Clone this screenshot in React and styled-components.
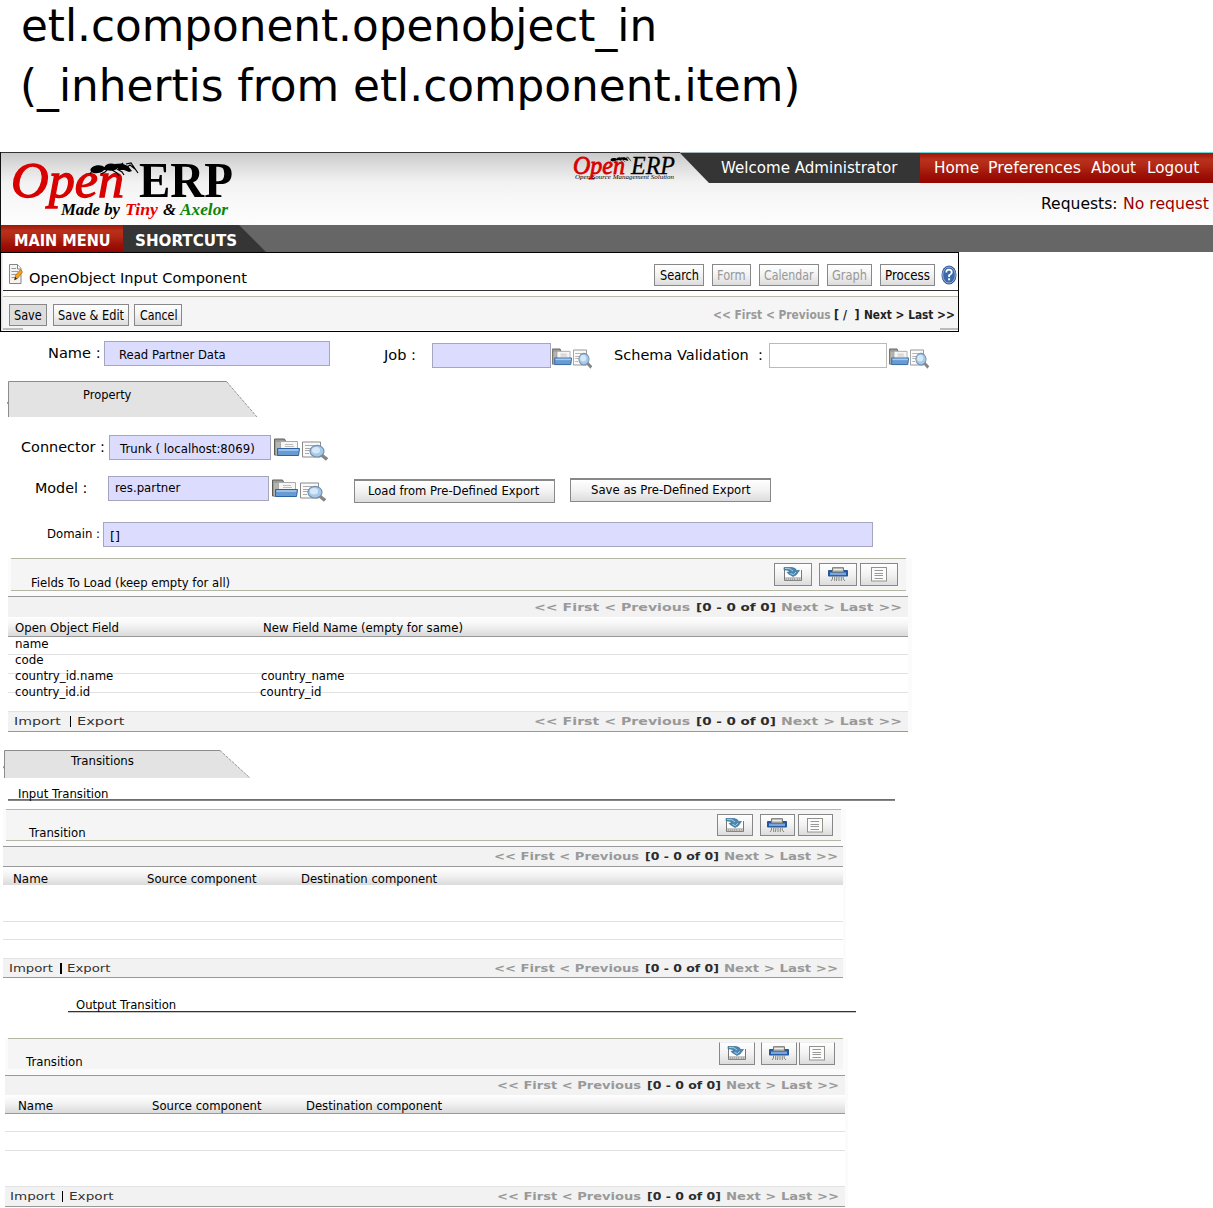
import React, { useLayoutEffect, useRef, useState } from "react";
import styled, { createGlobalStyle, css } from "styled-components";

const Global = createGlobalStyle`
  html, body { margin: 0; padding: 0; background: #fff; }
  body { font-family: "DejaVu Sans", sans-serif; color: #000; overflow: hidden; }
  svg { display: block; flex: none; }
`;

/* ---------- text ---------- */

const TextBox = styled.span`
  display: block;
  flex: none;
  overflow: visible;
  width: ${(p) => p.$w}px;
  height: ${(p) => p.$line}px;
  line-height: ${(p) => p.$line}px;
  margin-left: ${(p) => p.$gap}px;
  margin-top: ${(p) => p.$top}px;
  font-size: ${(p) => p.$size}px;
  font-weight: ${(p) => (p.$bold ? 700 : 400)};
  color: ${(p) => p.$color};
`;

const TextInk = styled.span`
  display: inline-block;
  vertical-align: top;
  margin-left: -0.015em;
  white-space: pre;
  transform-origin: 0 0;
`;

/* One line of text, stretched to a set width and standing on a baseline. */
function Line({ children, w, gap = 0, base = 0, size = 12, bold, color = "#000" }) {
  const ref = useRef(null);
  const [scale, setScale] = useState(1);
  useLayoutEffect(() => {
    const natural = ref.current.offsetWidth;
    if (natural) setScale((w + size * 0.05) / natural);
  }, [w, size, children]);
  const ascent = Math.round(size * 0.928);
  const descent = Math.round(size * 0.236);
  return (
    <TextBox $w={w} $gap={gap} $top={base - ascent} $line={ascent + descent} $size={size} $bold={bold} $color={color}>
      <TextInk ref={ref} style={{ transform: `scaleX(${scale})` }}>{children}</TextInk>
    </TextBox>
  );
}

/* ---------- layout ---------- */

const Page = styled.main`
  width: 1213px;
  height: 1208px;
  overflow: hidden;
  display: flex;
  flex-direction: column;
  align-items: flex-start;
`;

const Row = styled.div`
  display: flex;
  flex: none;
  align-items: flex-start;
  height: ${(p) => p.$h}px;
  width: ${(p) => (p.$w ? `${p.$w}px` : "100%")};
`;

const Push = styled.div`
  flex: none;
  margin-left: ${(p) => p.$gap || 0}px;
  margin-top: ${(p) => p.$top || 0}px;
`;

const Header = styled.header`
  display: flex;
  align-items: flex-start;
  box-sizing: border-box;
  flex: none;
  width: 1213px;
  height: 73px;
  border-left: 1px solid #111;
  padding-top: 1px;
  background:
    linear-gradient(90deg, #333 679px, #a5b5b5 679px 919px, #70d5d5 919px) 0 0 / 100% 1px no-repeat,
    linear-gradient(#c8c8c8, #dedede 20%, #f2f2f2 42%, #f8f8f8 65%, #fdfdfd);
`;

const Account = styled.div`
  width: 533px;
  flex: none;
`;

const Welcome = styled.div`
  display: flex;
  align-items: flex-start;
  width: 240px;
  height: 30px;
  background: #353535;
  clip-path: polygon(0 0, 100% 0, 100% 100%, 29px 100%);
`;

const red = css`
  background: linear-gradient(#a01608, #b9301c 22%, #b02714 45%, #9c1006 75%, #950500);
`;

const Links = styled.nav`
  display: flex;
  align-items: flex-start;
  width: 293px;
  height: 30px;
  ${red}
`;

const MenuBar = styled.nav`
  display: flex;
  flex: none;
  box-sizing: border-box;
  width: 1213px;
  height: 27px;
  border-left: 1px solid #111;
  background: #666;
`;

const MainMenu = styled.div`
  display: flex;
  align-items: flex-start;
  width: 122px;
  ${red}
`;

const Shortcuts = styled.div`
  display: flex;
  align-items: flex-start;
  width: 143px;
  background: #353535;
  clip-path: polygon(0 0, 116px 0, 100% 100%, 0 100%);
`;

const Toolbar = styled.section`
  box-sizing: border-box;
  flex: none;
  width: 959px;
  height: 80px;
  border: 1px solid #000;
  padding-left: 2px;
  background: linear-gradient(90deg, #ddd, #f3f3f3) 0 0 / 2px 100% no-repeat;
`;

const ToolbarTitle = styled.div`
  display: flex;
  align-items: flex-start;
  height: 37px;
  border-bottom: 1px solid #333;
  background: #fff;
`;

const ToolbarActions = styled.div`
  display: flex;
  align-items: flex-start;
  height: 33px;
  margin-top: 5px;
  border-top: 1px solid #b9bbab;
  background:
    linear-gradient(#bbb, #bbb) 0 100% / 20px 2px no-repeat,
    linear-gradient(#bbb, #bbb) 100% 100% / 18px 2px no-repeat,
    #f5f5f5;
`;

const Button = styled.button`
  display: flex;
  align-items: flex-start;
  flex: none;
  box-sizing: border-box;
  padding: 0;
  margin: ${(p) => p.$top}px 0 0 ${(p) => p.$gap}px;
  width: ${(p) => p.$w}px;
  height: ${(p) => p.$h || 22}px;
  border: 1px solid #888;
  border-top-width: ${(p) => (p.$thick ? 2 : 1)}px;
  font: inherit;
  background: ${(p) => (p.$pressed ? "#ddd" : "linear-gradient(#fff, #f2f2f2 50%, #dcdcdc)")};
`;

const IconButton = styled(Button)`
  height: ${(p) => p.$h}px;
  ${(p) => p.$open && css`border-top-color: #f0f0f0;`}
`;

const Field = styled.div`
  display: flex;
  align-items: flex-start;
  flex: none;
  box-sizing: border-box;
  width: ${(p) => p.$w}px;
  height: 25px;
  margin: ${(p) => p.$top}px 0 0 ${(p) => p.$gap}px;
  border: 1px solid ${(p) => (p.$plain ? "#bbb" : "#a5a5bd")};
  background: ${(p) => (p.$plain ? "#fff" : "#dcdcff")};
`;

const Tab = styled.div`
  display: grid;
  flex: none;
  width: 251px;
  height: ${(p) => p.$h}px;
  margin: ${(p) => p.$top}px 0 0 ${(p) => p.$left}px;
  > * { grid-area: 1 / 1; }
`;

const SectionRule = styled.div`
  display: flex;
  align-items: flex-start;
  flex: none;
  box-sizing: border-box;
  width: ${(p) => p.$w}px;
  height: ${(p) => p.$h}px;
  margin-left: ${(p) => p.$left}px;
  ${(p) =>
    p.$dark
      ? css`background: linear-gradient(#333 50%, #c5c5c5 50%) 0 100% / 100% 2px no-repeat;`
      : css`background: linear-gradient(#6e6e6e 50%, #858585 50%) 0 100% / 100% 2px no-repeat;`}
`;

const Panel = styled.section`
  flex: none;
  width: ${(p) => p.$w}px;
  margin: ${(p) => p.$top}px 0 0 ${(p) => p.$left}px;
  background: #fbfbfb;
`;

const PanelHead = styled.div`
  display: flex;
  align-items: flex-start;
  box-sizing: border-box;
  width: ${(p) => p.$w}px;
  height: ${(p) => p.$h}px;
  margin: 0 0 ${(p) => p.$after}px 3px;
  border-top: 1px solid #b5b6a5;
  border-bottom: ${(p) => (p.$noRule ? "none" : "1px solid #b5b6a5")};
  background: #f5f5f5;
`;

const Table = styled.div`
  width: ${(p) => p.$w}px;
  border-top: 1px solid #999;
  border-bottom: 1px solid #999;
  background: #fff;
`;

const PagerRow = styled.div`
  display: flex;
  align-items: flex-start;
  height: ${(p) => p.$h}px;
  background: #f2f2f2;
`;

const TableHead = styled.div`
  display: flex;
  align-items: flex-start;
  box-sizing: border-box;
  height: ${(p) => p.$h}px;
  border-top: ${(p) => (p.$rule === "top" ? "1px solid #999" : "none")};
  border-bottom: ${(p) => (p.$rule === "bottom" ? "1px solid #999" : "none")};
  background: linear-gradient(#fff, #f3f3f3 45%, #dadada);
`;

const Body = styled.div`
  display: grid;
  > * { grid-area: 1 / 1; }
`;

const Rule = styled.div`
  box-sizing: border-box;
  height: ${(p) => p.$h}px;
  border-bottom: 1px solid #e2e2e2;
`;

/* ---------- drawings ---------- */

const serif = '"Liberation Serif", serif';

function Ant({ transform }) {
  return (
    <g transform={transform}>
      <ellipse cx="8.5" cy="6.2" rx="7.2" ry="3.9" transform="rotate(-8 8.5 6.2)" />
      <ellipse cx="22" cy="4.2" rx="6.5" ry="3.6" />
      <path d="M14 4H18V7H14ZM25 1L33 .5L39 3L43 8L40 9L35 7L30 7Z" />
      <path d="M3 8L1 11M19 6L16 9L12 11M23 7L28 10L30 13M28 6L33 9L35 12M31 3L34 0M37 1L42 0L49 10M38 4L41 2L46 6" fill="none" stroke="#000" strokeWidth="1.2" />
    </g>
  );
}

function Logo() {
  return (
    <svg width="230" height="66" viewBox="0 0 230 66">
      <g fontFamily={serif}>
        <text x="3" y="44" fontSize="50" fontStyle="italic" fill="#d80000" stroke="#d80000" strokeWidth="1.3" textLength="113" lengthAdjust="spacingAndGlyphs">Open</text>
        <text x="131" y="44" fontSize="50" fontWeight="700" textLength="94" lengthAdjust="spacingAndGlyphs">ERP</text>
        <g fontSize="16.5" fontWeight="700" fontStyle="italic">
          <text x="53" y="62" textLength="59" lengthAdjust="spacingAndGlyphs">Made by</text>
          <text x="117" y="62" fill="#e80000" textLength="33" lengthAdjust="spacingAndGlyphs">Tiny</text>
          <text x="155" y="62" textLength="13" lengthAdjust="spacingAndGlyphs">&amp;</text>
          <text x="172" y="62" fill="#0a860a" textLength="48" lengthAdjust="spacingAndGlyphs">Axelor</text>
        </g>
      </g>
      <Ant transform="translate(81 10)" />
    </svg>
  );
}

function SmallLogo() {
  return (
    <svg width="107" height="30" viewBox="0 0 107 30">
      <g fontFamily={serif} fontStyle="italic">
        <text x="0" y="21" fontSize="25" fill="#d80000" stroke="#d80000" strokeWidth="0.8" textLength="52" lengthAdjust="spacingAndGlyphs">Open</text>
        <text x="58" y="21" fontSize="25" stroke="#000" strokeWidth="0.3" textLength="44" lengthAdjust="spacingAndGlyphs">ERP</text>
        <text x="2" y="26" fontSize="6.5" textLength="99" lengthAdjust="spacingAndGlyphs">Open Source Management Solution</text>
      </g>
      <Ant transform="translate(37 4) scale(.43)" />
    </svg>
  );
}

function EditPage() {
  return (
    <svg width="14" height="21" viewBox="0 0 14 21">
      <path d="M.5 .5H8.5L12 4.5V19.5H.5Z" fill="#f4f4f4" stroke="#858585" />
      <path d="M8.5 .5V5H12" fill="#fff" stroke="#858585" />
      <path d="M2.5 4.5H7M2.5 7.5H9M2.5 10.5H8M2.5 13.5H6" stroke="#999" />
      <path d="M5.5 16L6.5 11.5L11.5 5.5L13.5 8L8.5 14.5Z" fill="#f6a31c" stroke="#a85d08" strokeWidth=".7" />
      <path d="M5.5 16L6.2 13L8 14.6Z" fill="#222" />
    </svg>
  );
}

function Help() {
  return (
    <svg width="16" height="20" viewBox="0 0 16 20">
      <ellipse cx="8" cy="10" rx="7.5" ry="9.4" fill="#28518f" />
      <ellipse cx="8" cy="10" rx="6.3" ry="8.1" fill="#3b69aa" stroke="#b9cce6" strokeWidth=".8" />
      <path d="M5.3 7.5Q5.2 4.7 8 4.7Q10.8 4.7 10.8 7.3Q10.8 9 8.1 10.4V12" fill="none" stroke="#fff" strokeWidth="1.8" />
      <rect x="7.1" y="13.3" width="2" height="2" fill="#fff" />
    </svg>
  );
}

function Folder({ w = 26, h = 19 }) {
  return (
    <svg width={w} height={h} viewBox="0 0 26 19" preserveAspectRatio="none">
      <path d="M.5 17V1H10.5L12 4H22V17Z" fill="#9b9b97" stroke="#5d5d58" />
      <path d="M2 17V4H6V17Z" fill="#b5b5b0" />
      <path d="M6.5 3.5H23.5V14H6.5Z" fill="#f6f6f6" stroke="#aaa" />
      <path d="M11 6.5H19M11 8.5H20" stroke="#bdbdbd" />
      <path d="M3.5 10.5H25.5L24.5 17.5H3.5Z" fill="#689bd1" stroke="#2b61a5" />
      <path d="M4.5 12H24.5" stroke="#a9c8ea" strokeWidth="1.6" />
    </svg>
  );
}

function SearchPage({ w = 26, h = 20 }) {
  return (
    <svg width={w} height={h} viewBox="0 0 26 20" preserveAspectRatio="none">
      <path d="M.5 1H18.5V16H.5Z" fill="#fafafa" stroke="#8a8a8a" />
      <path d="M3 4.5H12M3 7.5H9M3 9.5H8M3 12.5H7" stroke="#aaa" />
      <path d="M19.5 14L25 18.5" stroke="#858585" strokeWidth="3.4" />
      <ellipse cx="15" cy="10.2" rx="7" ry="5.8" fill="#a6c9ea" stroke="#7590ad" strokeWidth="1.2" />
      <ellipse cx="14" cy="9.2" rx="4" ry="3.2" fill="#d5e8f8" />
    </svg>
  );
}

function DiskIcon() {
  return (
    <svg width="20" height="15" viewBox="0 0 20 15">
      <path d="M1.5 3V13.5H18.5V3" fill="#fff" stroke="#777" />
      <path d="M2 10H18V13.2H2Z" fill="#c9c9c5" />
      <path d="M3 12H12M14 12H17" stroke="#888" strokeDasharray="1 1" />
      <path d="M1 .5H9Q13 1 13.5 3.5H16.5L13 8L10 9.5L5 6.5L4 5.5L7 4.5Q5 2.8 1 2.8Z" fill="#4d87b0" stroke="#2a638c" strokeWidth=".6" />
      <path d="M2 1.5Q8 .8 10 4" fill="none" stroke="#a9cce2" />
      <path d="M7.5 6.4L10.4 7.6L13 5.2" fill="none" stroke="#9fd0ef" />
    </svg>
  );
}

function ShredIcon() {
  return (
    <svg width="20" height="15" viewBox="0 0 20 15">
      <rect x="0" y="3" width="20" height="6.5" rx=".8" fill="#2457a0" />
      <rect x="2" y="5.5" width="16" height="2.6" fill="#78a6df" />
      <path d="M4.5 5V.7H15.5V5Z" fill="#c6c6c0" stroke="#777770" />
      <path d="M5.5 2.5H14.5" stroke="#eee" />
      <path d="M4.5 9.5V12L3 14M6.7 9.5V14M9 9.5L8.5 14M11 9.5V14M13.3 9.5V14M15.2 9.5V12L17 14" fill="none" stroke="#85857e" />
    </svg>
  );
}

function ListIcon() {
  return (
    <svg width="16" height="15" viewBox="0 0 16 15">
      <rect x=".5" y=".5" width="15" height="13.5" fill="#fbfbfb" stroke="#92928b" />
      <path d="M3.5 3.5H12M3.5 6.5H12M3.5 8.5H12M3.5 11.5H12" stroke="#999" />
    </svg>
  );
}

function TabShape({ h, top = 219.5, end = 250 }) {
  return (
    <svg width="251" height={h} viewBox={`0 0 251 ${h}`}>
      <path d={`M1 ${h}V.5H${top}L${end} ${h}Z`} fill="#e3e3e3" />
      <path d={`M1.5 ${h}V.5H${top}`} fill="none" stroke="#8c8c8c" />
      <path d={`M${top} .5L${end} ${h}`} fill="none" stroke="#9a9a9a" strokeDasharray="3 1" />
      <rect x="0" y={h * 0.58} width="1" height="2" fill="#999" />
    </svg>
  );
}

/* ---------- parts ---------- */

function TextButton({ gap, top, w, tw, inset = 5, base, children, color, pressed }) {
  return (
    <Button $gap={gap} $top={top} $w={w} $pressed={pressed}>
      <Line gap={inset - 1} base={base} w={tw} size={13.5} color={color}>{children}</Line>
    </Button>
  );
}

function Pager({ gap, base, widths }) {
  return (
    <>
      <Line gap={gap - 1} base={base} w={widths[0]} size={11} bold color="#999">{"<< First < Previous"}</Line>
      <Line gap={7} base={base} w={widths[1]} size={11} bold color="#2b2b2b">[0 - 0 of 0]</Line>
      <Line gap={6} base={base} w={widths[2]} size={11} bold color="#999">{"Next > Last >>"}</Line>
    </>
  );
}

const Divider = styled.div`
  flex: none;
  width: ${(p) => p.$w}px;
  height: 11px;
  margin: ${(p) => p.$top}px 0 0 ${(p) => p.$gap}px;
  background: #000;
`;

function ImportExport({ left, base, imp, bar, barW = 1, exp, expW }) {
  return (
    <>
      <Line gap={left} base={base} w={imp} size={11} color="#333">Import</Line>
      <Divider $w={barW} $top={base - 9} $gap={bar} />
      <Line gap={exp - 1} base={base} w={expW + 1} size={11} color="#333">Export</Line>
    </>
  );
}

function Actions({ gap, top, widths, gaps, h, open }) {
  const icons = [<DiskIcon key="d" />, <ShredIcon key="s" />, <ListIcon key="l" />];
  return icons.map((icon, i) => (
    <IconButton key={i} $gap={i ? gaps[i - 1] : gap} $top={top} $w={widths[i]} $h={h} $open={open}>
      <Push $gap={Math.floor((widths[i] - (i === 2 ? 18 : 22)) / 2)} $top={3}>{icon}</Push>
    </IconButton>
  ));
}

export default function App() {
  return (
    <Page>
      <Global />
      <Row $h={60}><Line gap={22} base={41} w={634} size={44}>etl.component.openobject_in</Line></Row>
      <Row $h={92}><Line gap={21} base={41} w={778} size={44}>(_inhertis from etl.component.item)</Line></Row>

      <Header>
        <Push $gap={7}><Logo /></Push>
        <Push $gap={335}><SmallLogo /></Push>
        <Account>
          <Row $h={30}>
            <Welcome><Line gap={41} base={20} w={176} size={15} color="#fff">Welcome Administrator</Line></Welcome>
            <Links>
              <Line gap={14} base={20} w={44} size={15} color="#fff">Home</Line>
              <Line gap={10} base={20} w={92} size={15} color="#fff">Preferences</Line>
              <Line gap={11} base={20} w={44} size={15} color="#fff">About</Line>
              <Line gap={12} base={20} w={51} size={15} color="#fff">Logout</Line>
            </Links>
          </Row>
          <Row $h={42}>
            <Line gap={361} base={26} w={76} size={15}>Requests:</Line>
            <Line gap={6} base={26} w={85} size={15} color="#990000">No request</Line>
          </Row>
        </Account>
      </Header>

      <MenuBar>
        <MainMenu><Line gap={13} base={21} w={96} size={15} bold color="#fff">MAIN MENU</Line></MainMenu>
        <Shortcuts><Line gap={12} base={21} w={101} size={15} bold color="#fff">SHORTCUTS</Line></Shortcuts>
      </MenuBar>

      <Toolbar>
        <ToolbarTitle>
          <Push $gap={6} $top={11}><EditPage /></Push>
          <Line gap={6} base={30} w={217} size={14.67}>OpenObject Input Component</Line>
          <TextButton gap={408} top={11} w={50} inset={6} tw={38} base={15}>Search</TextButton>
          <TextButton gap={8} top={11} w={39} tw={28} base={15} color="#999">Form</TextButton>
          <TextButton gap={8} top={11} w={60} tw={49} base={15} color="#999">Calendar</TextButton>
          <TextButton gap={8} top={11} w={45} tw={34} base={15} color="#999">Graph</TextButton>
          <TextButton gap={8} top={11} w={55} tw={44} base={15}>Process</TextButton>
          <Push $gap={6} $top={12}><Help /></Push>
        </ToolbarTitle>
        <ToolbarActions>
          <TextButton gap={6} top={7} w={38} tw={27} base={15} pressed>Save</TextButton>
          <TextButton gap={6} top={7} w={76} tw={65} base={15}>{"Save & Edit"}</TextButton>
          <TextButton gap={5} top={7} w={48} inset={6} tw={37} base={15}>Cancel</TextButton>
          <Line gap={531} base={22} w={117} size={12.5} bold color="#999">{"<< First < Previous"}</Line>
          <Line gap={4} base={22} w={25} size={12.5} bold color="#222">{"[ /  ]"}</Line>
          <Line gap={5} base={22} w={90} size={12.5} bold color="#222">{"Next > Last >>"}</Line>
        </ToolbarActions>
      </Toolbar>

      <Row $h={49}>
        <Line gap={48} base={26} w={52} size={14.67}>Name :</Line>
        <Field $gap={4} $top={9} $w={226}><Line gap={14} base={17} w={106}>Read Partner Data</Line></Field>
        <Line gap={54} base={28} w={31} size={14.67}>Job :</Line>
        <Field $gap={17} $top={11} $w={119} />
        <Push $gap={1} $top={16}><Folder w={20} h={18} /></Push>
        <Push $gap={1} $top={17}><SearchPage w={19} h={20} /></Push>
        <Line gap={22} base={28} w={148} size={14.67}>Schema Validation  :</Line>
        <Field $gap={7} $top={11} $w={118} $plain />
        <Push $gap={2} $top={16}><Folder w={20} h={18} /></Push>
        <Push $gap={1} $top={17}><SearchPage w={19} h={20} /></Push>
      </Row>

      <Tab $left={7} $top={0} $h={36}>
        <TabShape h={36} />
        <Line gap={76} base={18} w={48}>Property</Line>
      </Tab>

      <Row $h={53}>
        <Line gap={21} base={35} w={83} size={14.67}>Connector :</Line>
        <Field $gap={5} $top={18} $w={162}><Line gap={10} base={17} w={134}>Trunk ( localhost:8069)</Line></Field>
        <Push $gap={3} $top={21}><Folder /></Push>
        <Push $gap={2} $top={24}><SearchPage /></Push>
      </Row>
      <Row $h={45}>
        <Line gap={35} base={23} w={52} size={14.67}>Model :</Line>
        <Field $gap={21} $top={6} $w={161}><Line gap={6} base={15} w={65}>res.partner</Line></Field>
        <Push $gap={3} $top={9}><Folder /></Push>
        <Push $gap={2} $top={12}><SearchPage /></Push>
        <Button $gap={28} $top={9} $w={201} $h={24} $thick><Line gap={13} base={14} w={171}>Load from Pre-Defined Export</Line></Button>
        <Button $gap={15} $top={8} $w={201} $h={24} $thick><Line gap={20} base={14} w={159}>Save as Pre-Defined Export</Line></Button>
      </Row>
      <Row $h={42}>
        <Line gap={47} base={23} w={52}>Domain :</Line>
        <Field $gap={4} $top={7} $w={770}><Line gap={6} base={18} w={9}>[]</Line></Field>
      </Row>

      <Panel $left={8} $top={1} $w={904}>
        <PanelHead $w={895} $h={33} $after={5}>
          <Line gap={20} base={28} w={199}>Fields To Load (keep empty for all)</Line>
          <Actions gap={544} gaps={[7, 3]} top={4} widths={[38, 38, 38]} h={23} />
        </PanelHead>
        <Table $w={900}>
          <PagerRow $h={20}><Pager gap={527} base={14} widths={[155, 79, 120]} /></PagerRow>
          <TableHead $h={20} $rule="bottom">
            <Line gap={7} base={15} w={103}>Open Object Field</Line>
            <Line gap={145} base={15} w={199}>New Field Name (empty for same)</Line>
          </TableHead>
          <Body>
            <div><Rule $h={18} /><Rule $h={19} /><Rule $h={19} /><Rule $h={19} /></div>
            <div>
              <Row $h={16}><Line gap={7} base={11} w={33}>name</Line></Row>
              <Row $h={16}><Line gap={7} base={11} w={28}>code</Line></Row>
              <Row $h={16}><Line gap={7} base={11} w={98}>country_id.name</Line><Line gap={148} base={11} w={83}>country_name</Line></Row>
              <Row $h={16}><Line gap={7} base={11} w={75}>country_id.id</Line><Line gap={170} base={11} w={61}>country_id</Line></Row>
            </div>
          </Body>
          <PagerRow $h={19}>
            <ImportExport left={6} base={13} imp={47} bar={9} exp={7} expW={46} />
            <Pager gap={411} base={13} widths={[155, 79, 120]} />
          </PagerRow>
        </Table>
      </Panel>

      <Tab $left={3} $top={18} $h={28}>
        <TabShape h={28} top={217} end={247} />
        <Line gap={68} base={15} w={62}>Transitions</Line>
      </Tab>
      <SectionRule $left={8} $w={887} $h={23}>
        <Line gap={10} base={20} w={90}>Input Transition</Line>
      </SectionRule>

      <Panel $left={3} $top={8} $w={843}>
        <PanelHead $w={835} $h={32} $after={5}>
          <Line gap={23} base={27} w={56}>Transition</Line>
          <Actions gap={632} gaps={[7, 3]} top={4} widths={[36, 35, 35]} h={22} />
        </PanelHead>
        <Table $w={840}>
          <PagerRow $h={19}><Pager gap={492} base={13} widths={[144, 73, 113]} /></PagerRow>
          <TableHead $h={19} $rule="top">
            <Line gap={10} base={16} w={34}>Name</Line>
            <Line gap={100} base={16} w={109}>Source component</Line>
            <Line gap={45} base={16} w={136}>Destination component</Line>
          </TableHead>
          <Rule $h={37} /><Rule $h={18} /><Rule $h={19} />
          <PagerRow $h={18}>
            <ImportExport left={6} base={13} imp={44} bar={7} barW={2} exp={6} expW={42} />
            <Pager gap={385} base={13} widths={[144, 73, 113]} />
          </PagerRow>
        </Table>
      </Panel>

      <SectionRule $left={68} $w={788} $h={35} $dark>
        <Line gap={8} base={31} w={100}>Output Transition</Line>
      </SectionRule>

      <Panel $left={5} $top={25} $w={843}>
        <PanelHead $w={835} $h={31} $after={6} $noRule>
          <Line gap={18} base={27} w={56}>Transition</Line>
          <Actions gap={637} gaps={[6, 2]} top={3} widths={[36, 36, 36]} h={23} open />
        </PanelHead>
        <Table $w={840}>
          <PagerRow $h={19}><Pager gap={493} base={13} widths={[143, 73, 112]} /></PagerRow>
          <TableHead $h={19} $rule="bottom">
            <Line gap={13} base={15} w={34}>Name</Line>
            <Line gap={100} base={15} w={109}>Source component</Line>
            <Line gap={45} base={15} w={136}>Destination component</Line>
          </TableHead>
          <Rule $h={18} /><Rule $h={19} /><Rule $h={36} />
          <PagerRow $h={19}>
            <ImportExport left={5} base={13} imp={45} bar={7} exp={7} expW={43} />
            <Pager gap={385} base={13} widths={[143, 73, 112]} />
          </PagerRow>
        </Table>
      </Panel>
    </Page>
  );
}
